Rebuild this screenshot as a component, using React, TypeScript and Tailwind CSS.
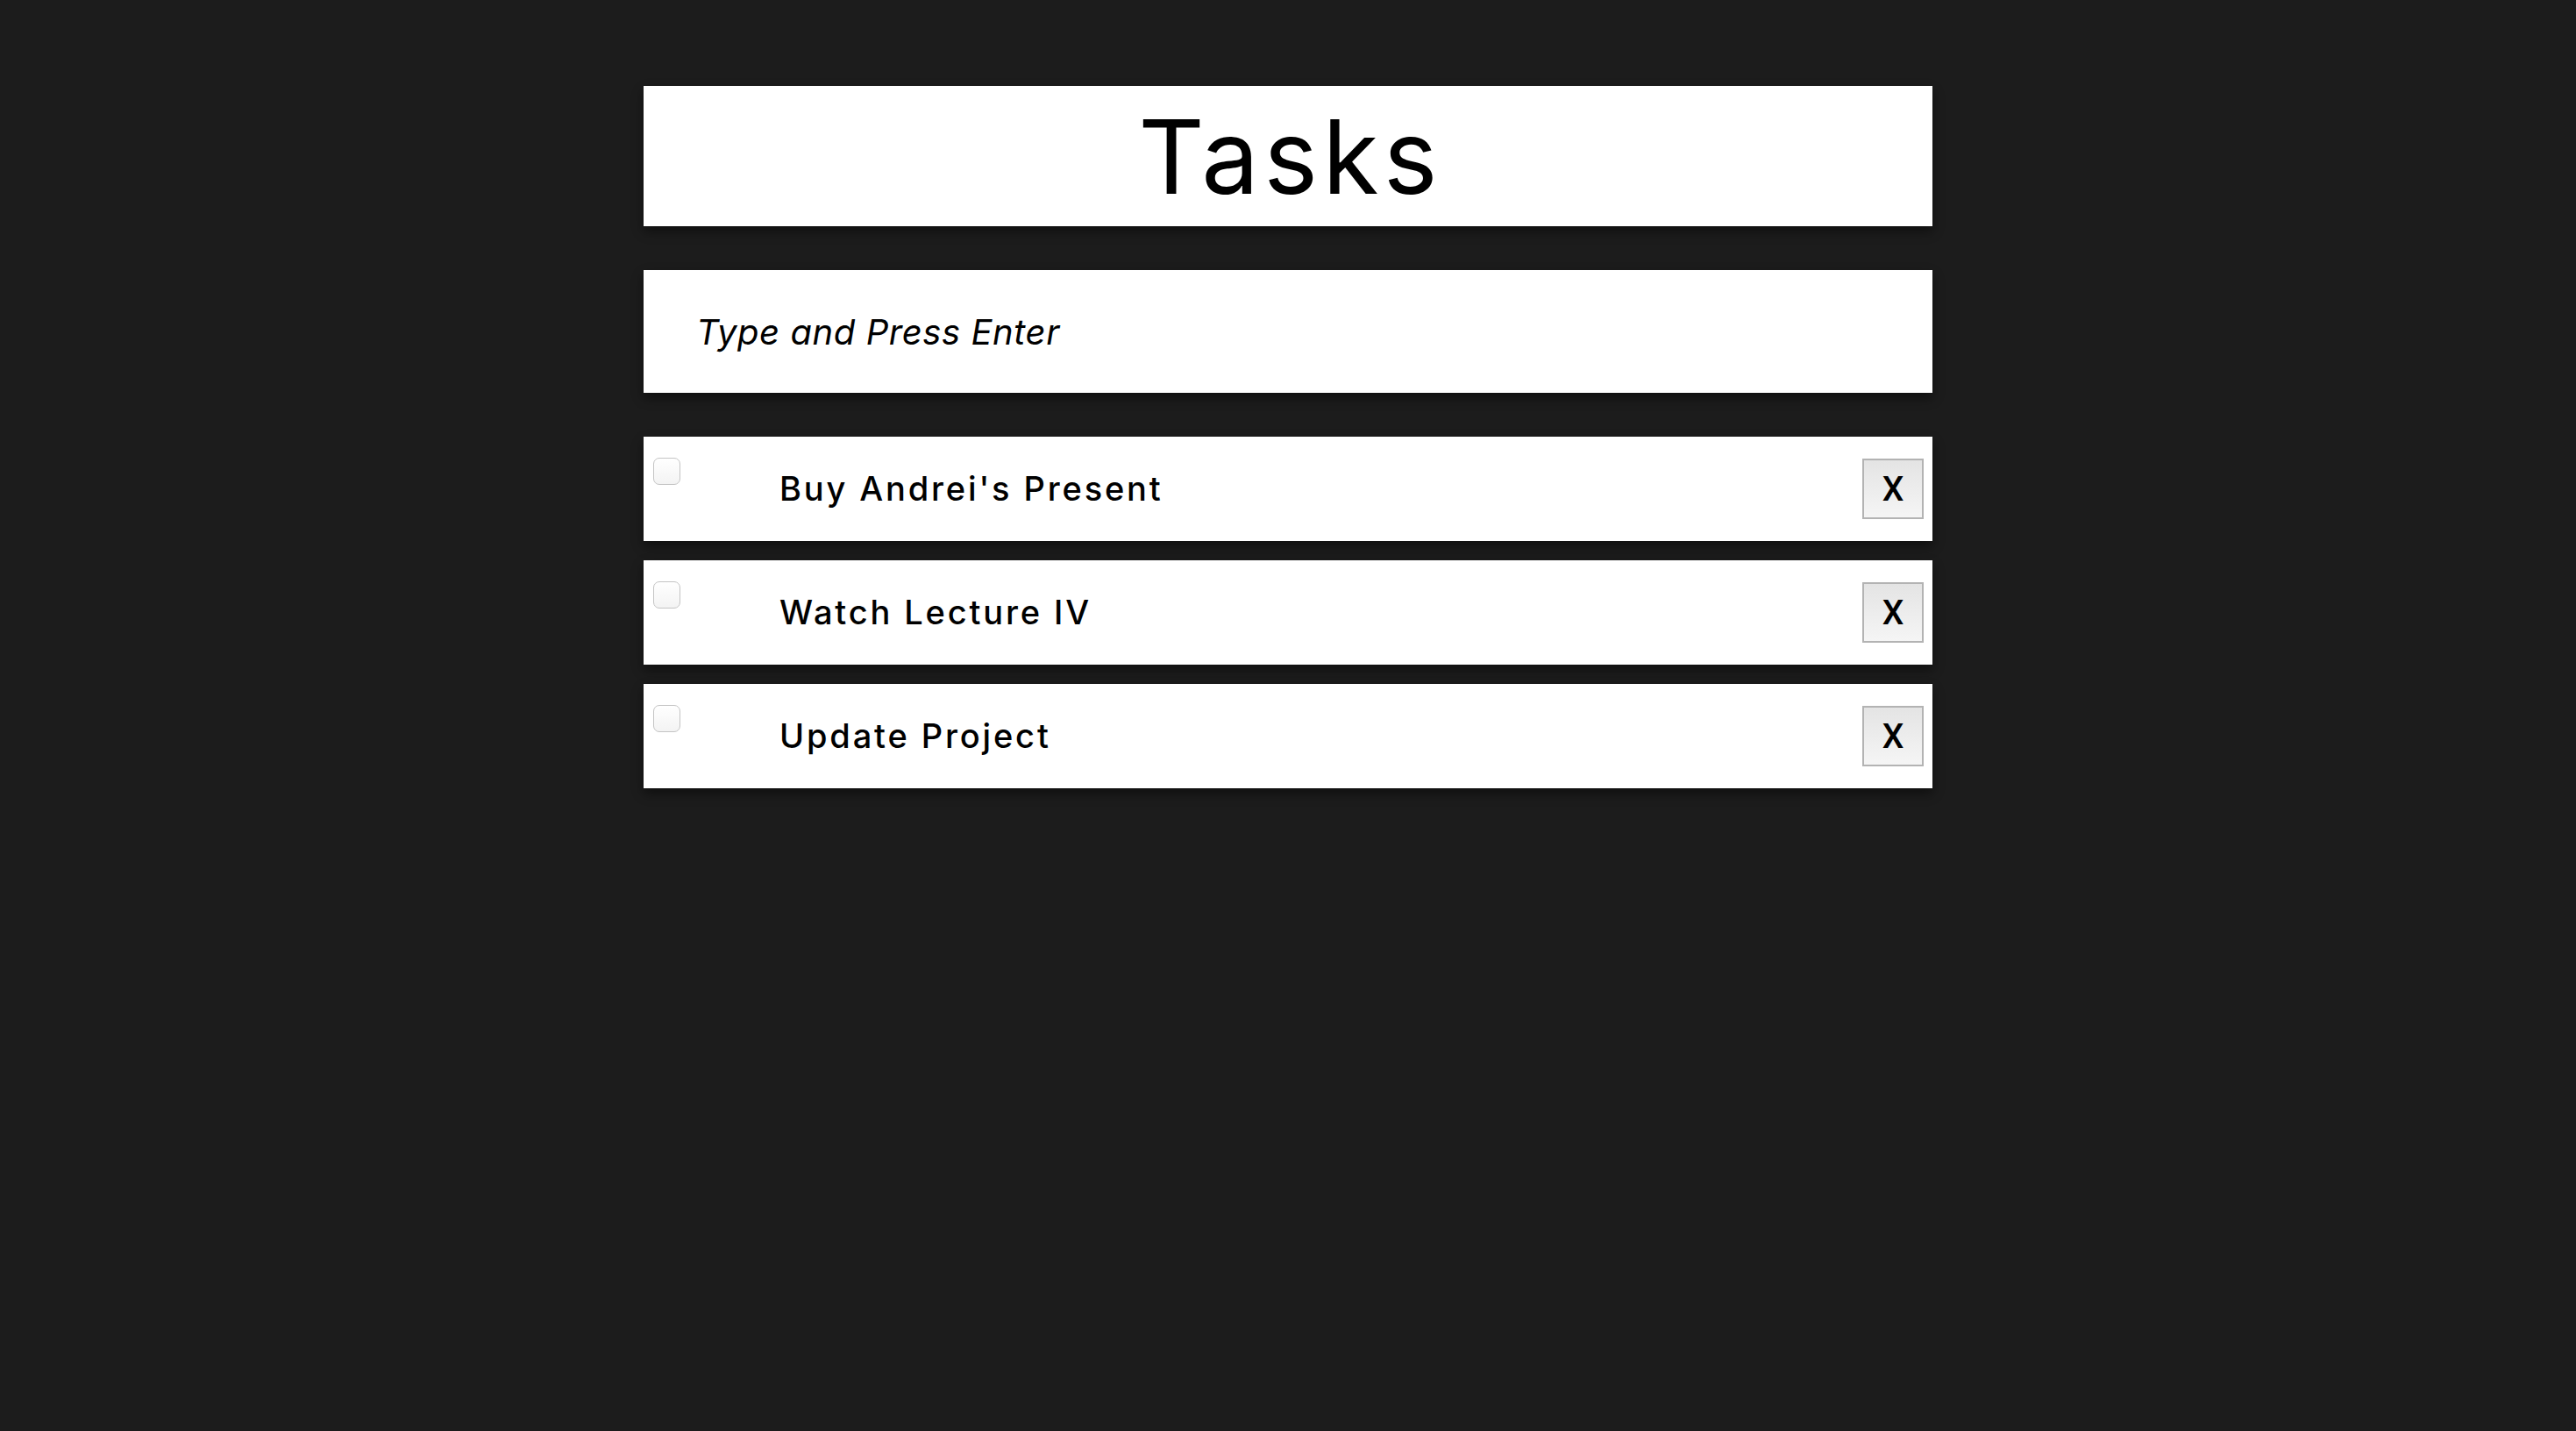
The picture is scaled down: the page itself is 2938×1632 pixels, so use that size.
import { useState } from 'react';

const initialTasks = [
  { id: 1, text: "Buy Andrei's Present", done: false },
  { id: 2, text: 'Watch Lecture IV', done: false },
  { id: 3, text: 'Update Project', done: false },
];

const font = { fontFamily: 'Inter, "Noto Sans", sans-serif' };

export default function App() {
  const [tasks, setTasks] = useState(initialTasks);
  const [draft, setDraft] = useState('');

  const addTask = (e: React.KeyboardEvent<HTMLInputElement>) => {
    if (e.key !== 'Enter' || !draft.trim()) return;
    setTasks([...tasks, { id: Date.now(), text: draft.trim(), done: false }]);
    setDraft('');
  };

  return (
    <div className="min-h-screen w-full bg-[#1c1c1c] pt-[98px]" style={font}>
      <div className="mx-auto flex w-[1470px] flex-col">
        {/* Header */}
        <div className="flex h-[160px] items-center justify-center bg-white shadow-[0_6px_12px_rgba(0,0,0,0.45)]">
          <h1 className="pl-[5px] text-[117px] font-normal leading-none tracking-[0.045em] text-black">Tasks</h1>
        </div>

        {/* New task input */}
        <div className="mt-[50px] flex h-[140px] items-center bg-white shadow-[0_6px_12px_rgba(0,0,0,0.45)]">
          <input
            value={draft}
            onChange={(e) => setDraft(e.target.value)}
            onKeyDown={addTask}
            placeholder="Type and Press Enter"
            className="h-full w-full bg-transparent pl-[60px] text-[40px] italic tracking-[0.014em] text-black outline-none placeholder:text-black"
            style={font}
          />
        </div>

        {/* Task list */}
        <ul className="mt-[50px] flex flex-col gap-[22px]">
          {tasks.map((t) => (
            <li
              key={t.id}
              className="flex h-[119px] items-center bg-white pr-[10px] shadow-[0_6px_12px_rgba(0,0,0,0.45)]"
            >
              <input
                type="checkbox"
                checked={t.done}
                onChange={() => setTasks(tasks.map((x) => (x.id === t.id ? { ...x, done: !x.done } : x)))}
                className="ml-[11px] mt-[24px] h-[31px] w-[31px] shrink-0 appearance-none self-start rounded-[7px] border border-[#c4c4c4] bg-gradient-to-b from-white to-[#f3f3f3] checked:bg-[#3b82f6]"
              />
              <span className="ml-[113px] flex-1 text-[38px] font-medium tracking-[0.075em] text-black">{t.text}</span>
              <button
                onClick={() => setTasks(tasks.filter((x) => x.id !== t.id))}
                className="flex h-[69px] w-[70px] items-center justify-center border-2 border-[#b3b3b3] bg-gradient-to-b from-[#e4e4e4] to-[#f5f5f5] pt-[2px] text-[39px] font-medium text-black"
                style={{ fontFamily: 'Roboto, Arial, sans-serif' }}
              >
                X
              </button>
            </li>
          ))}
        </ul>
      </div>
    </div>
  );
}
